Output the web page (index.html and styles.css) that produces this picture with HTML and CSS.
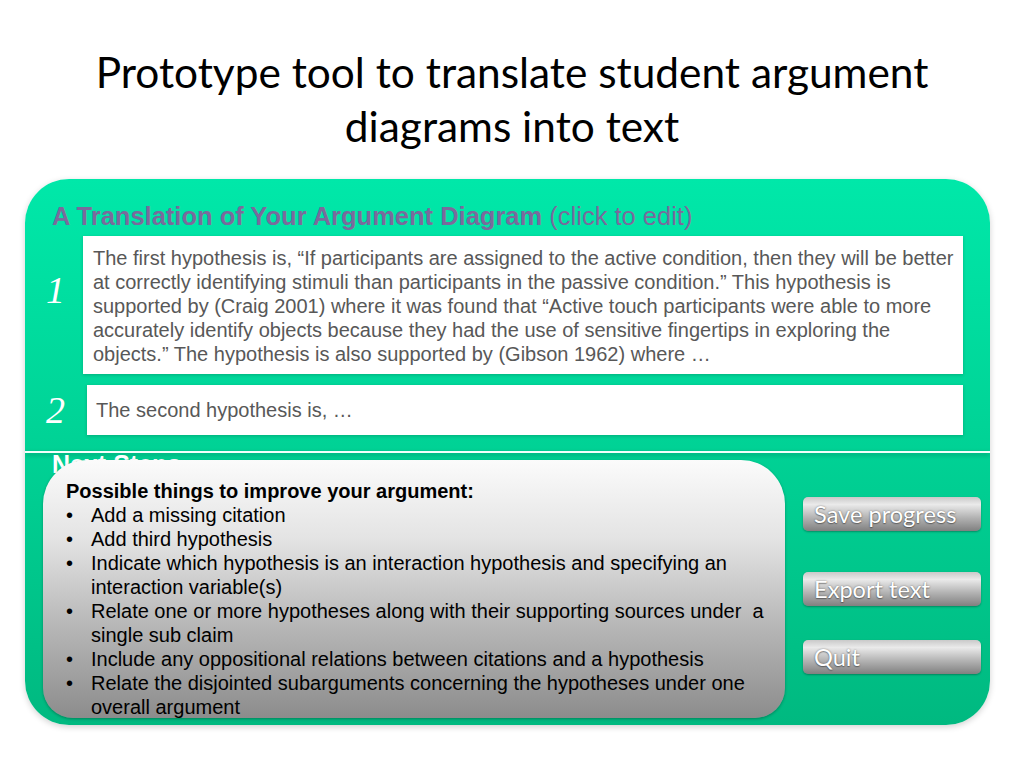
FILE: index.html
```html
<!DOCTYPE html>
<html>
<head>
<meta charset="utf-8">
<link rel="stylesheet" href="styles.css">
</head>
<body>
<div class="slide">
  <h1 class="title">Prototype tool to translate student argument<br>diagrams into text</h1>
  <div class="panel">
    <div class="heading"><b>A Translation of Your Argument Diagram</b> (click to edit)</div>
    <div class="row row1">
      <div class="num num1">1</div>
      <div class="box box1">The first hypothesis is, “If participants are assigned to the active condition, then they will be better at correctly identifying stimuli than participants in the passive condition.” This hypothesis is supported by (Craig 2001) where it was found that “Active touch participants were able to more accurately identify objects because they had the use of sensitive fingertips in exploring the objects.” The hypothesis is also supported by (Gibson 1962) where …</div>
    </div>
    <div class="row row2">
      <div class="num num2">2</div>
      <div class="box box2">The second hypothesis is, …</div>
    </div>
    <div class="divider"></div>
    <div class="lower">
      <div class="next-label">Next Steps</div>
      <div class="improve">
        <div class="improve-title">Possible things to improve your argument:</div>
        <ul class="list">
          <li>Add a missing citation</li>
          <li>Add third hypothesis</li>
          <li>Indicate which hypothesis is an interaction hypothesis and specifying an interaction variable(s)</li>
          <li>Relate one or more hypotheses along with their supporting sources under &nbsp;a single sub claim</li>
          <li>Include any oppositional relations between citations and a hypothesis</li>
          <li>Relate the disjointed subarguments concerning the hypotheses under one overall argument</li>
        </ul>
      </div>
      <div class="buttons">
        <div class="btn btn-save">Save progress</div>
        <div class="btn btn-export">Export text</div>
        <div class="btn btn-quit">Quit</div>
      </div>
    </div>
  </div>
</div>
</body>
</html>
```
FILE: styles.css
```css
* { box-sizing: border-box; }
html, body { margin: 0; padding: 0; background: #ffffff; }
.slide {
  width: 1024px;
  height: 768px;
  overflow: hidden;
  padding-top: 45px;
}
.title {
  margin: 0;
  font-family: "Lato", "Liberation Sans", sans-serif;
  font-weight: normal;
  font-size: 42.4px;
  line-height: 54px;
  text-align: center;
  color: #000;
}
.panel {
  margin: 26px 0 0 25px;
  width: 965px;
  height: 546px;
  border-radius: 44px;
  background: linear-gradient(180deg, #00e8a9 0%, #00d497 45%, #00b980 100%);
  box-shadow: 0 2px 6px rgba(0, 0, 0, 0.18);
  padding-top: 23px;
  overflow: hidden;
}
.heading {
  padding-left: 27px;
  font-family: "Liberation Sans", Arial, sans-serif;
  font-size: 25.5px;
  line-height: 28px;
  color: #7a6a9c;
}
.row {
  display: flex;
  align-items: flex-start;
  padding-right: 27px;
}
.row1 { margin-top: 6px; }
.row2 { margin-top: 11px; align-items: center; }
.num {
  font-family: "Liberation Serif", serif;
  font-style: italic;
  font-size: 38px;
  color: #ffffff;
  padding-left: 21px;
}
.num1 { width: 58px; line-height: 40px; margin-top: 34px; }
.num2 { width: 62px; line-height: 50px; }
.box {
  flex: 1;
  background: #ffffff;
  font-family: "Liberation Sans", Arial, sans-serif;
  font-size: 20px;
  line-height: 24px;
  color: #585858;
  box-shadow: 0 1px 3px rgba(0, 60, 40, 0.25);
}
.box1 {
  height: 138px;
  padding: 10px 8px 8px 10px;
}
.box2 {
  height: 50px;
  padding: 13px 9px;
}
.divider {
  margin-top: 16px;
  height: 2px;
  background: #f4fffb;
  box-shadow: 0 2px 4px rgba(0, 90, 60, 0.45);
}
.lower {
  position: relative;
  display: flex;
  align-items: flex-start;
  padding-top: 7px;
}
.next-label {
  position: absolute;
  left: 27px;
  top: -3px;
  font-family: "Liberation Sans", Arial, sans-serif;
  font-weight: bold;
  font-size: 25px;
  line-height: 28px;
  color: #ffffff;
}
.improve {
  position: relative;
  margin-left: 18px;
  width: 742px;
  height: 258px;
  border-radius: 44px 44px 30px 30px;
  background: linear-gradient(180deg, #fbfbfb 0%, #e4e4e4 30%, #b6b6b6 65%, #8c8c8c 100%);
  box-shadow: 0 1px 3px rgba(0, 0, 0, 0.3);
  padding: 19px 18px 0 23px;
  font-family: "Liberation Sans", Arial, sans-serif;
  font-size: 20px;
  line-height: 24px;
  color: #000;
}
.improve-title { font-weight: bold; }
.list {
  margin: 0;
  padding: 0 0 0 25px;
  list-style: none;
}
.list li { position: relative; }
.list li::before {
  content: "•";
  position: absolute;
  left: -25px;
}
.buttons {
  margin-left: 18px;
  width: 178px;
  display: flex;
  flex-direction: column;
}
.btn {
  height: 34px;
  border-radius: 5px;
  background: linear-gradient(180deg, #c9c9c9 0%, #eaeaea 22%, #b4b4b4 60%, #808080 100%);
  box-shadow: 0 1px 2px rgba(0, 0, 0, 0.3);
  font-family: "Lato", "Liberation Sans", sans-serif;
  font-size: 23.6px;
  line-height: 34px;
  color: #ffffff;
  padding-left: 11px;
  text-shadow: 0 0 2px rgba(0, 0, 0, 0.45), 0 1px 1px rgba(0, 0, 0, 0.3);
}
.btn-save { margin-top: 37px; }
.btn-export { margin-top: 41px; }
.btn-quit { margin-top: 34px; }
```
